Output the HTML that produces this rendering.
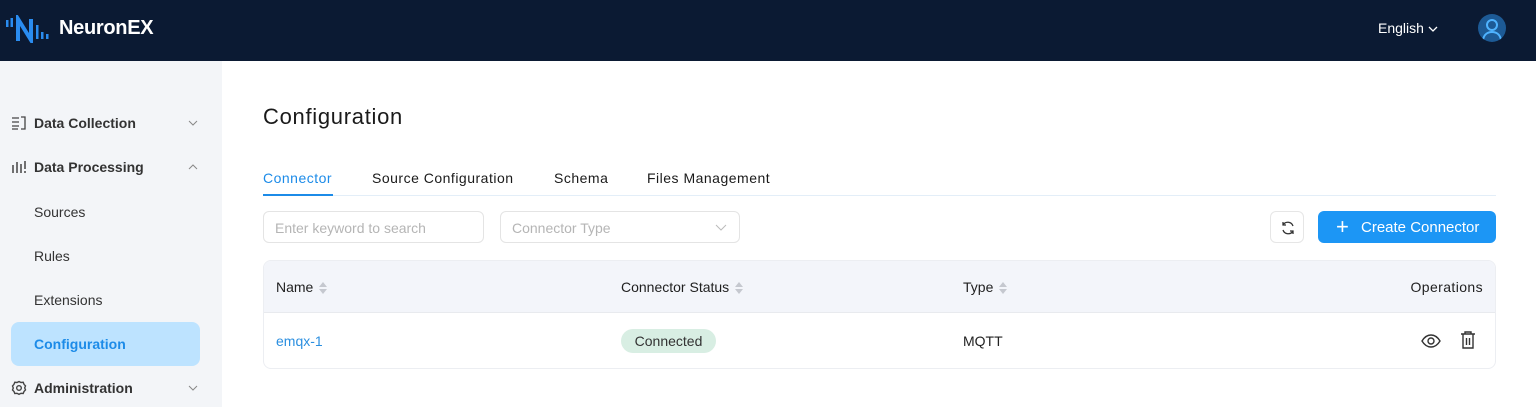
<!DOCTYPE html>
<html><head><meta charset="utf-8"><style>
*{box-sizing:border-box;margin:0;padding:0}
body{width:1536px;height:407px;overflow:hidden;font-family:"Liberation Sans",sans-serif;background:#fff;position:relative;color:#1f1f1f}
.hdr{position:absolute;left:0;top:0;width:1536px;height:61px;background:#0b1a33}
.logo{position:absolute;left:6px;top:15px}
.brand{position:absolute;left:59px;top:17px;color:#fff;font-size:20px;font-weight:bold;letter-spacing:-0.3px}
.lang{position:absolute;left:1378px;top:20px;color:#fff;font-size:14px}
.av{position:absolute;left:1478px;top:14px;width:28px;height:28px;border-radius:50%;background:#1d5a95;overflow:hidden}
.side{position:absolute;left:0;top:61px;width:222px;height:346px;background:#f3f5f8}
.mi{position:absolute;left:34px;font-size:14px;color:#333}
.mi.b{font-weight:bold;color:#333}
.ic{position:absolute;left:11px}
.chev{position:absolute;left:188px}
.act{position:absolute;left:11px;top:322px;width:189px;height:44px;background:#bde3ff;border-radius:8px}
h1{position:absolute;left:263px;top:104px;font-size:22px;font-weight:normal;color:#1a1a1a;letter-spacing:0.7px}
.tab{position:absolute;top:170px;font-size:14px;color:#1a1a1a;letter-spacing:0.5px}
.tabline{position:absolute;left:263px;top:195px;width:1233px;height:1px;background:#e3eef8}
.inp{position:absolute;top:211px;height:32px;border:1px solid #e4e4e4;border-radius:6px;font-size:14px;color:#b5b5b5;padding:8px 11px}
.btn{position:absolute;left:1318px;top:211px;width:178px;height:32px;background:#1c96f5;border-radius:6px;color:#fff;font-size:15px}
.rf{position:absolute;left:1270px;top:211px;width:34px;height:32px;border:1px solid #e6e6e6;border-radius:6px}
.tbl{position:absolute;left:263px;top:260px;width:1233px;height:109px;border:1px solid #eceef2;border-radius:8px;overflow:hidden}
.th{position:absolute;left:0;top:0;width:100%;height:52px;background:#f3f5fa;border-bottom:1px solid #e8eaee}
.t{position:absolute;font-size:14px}
.sort{display:inline-block;vertical-align:middle;margin-left:6px}
.tag{position:absolute;left:357px;top:68px;width:95px;height:24px;border-radius:12px;background:#d8eee3;font-size:14px;text-align:center;line-height:24px;color:#333}
</style></head><body>
<div class="hdr">
<svg class="logo" width="46" height="28" viewBox="0 0 46 28"><g fill="#2a8cf0"><rect x="0" y="5" width="2.5" height="7"/><rect x="4.5" y="3" width="2.5" height="9"/></g><path d="M12 26V4l13 21V4" stroke="#2a8cf0" stroke-width="4" fill="none"/><g fill="#2a8cf0"><rect x="30" y="10" width="2.5" height="14"/><rect x="35" y="17" width="2.5" height="7"/><rect x="40" y="19" width="2.5" height="5"/></g></svg>
<div class="brand">NeuronEX</div>
<div class="lang">English <svg width="10" height="8" viewBox="0 0 10 8"><path d="M1 2l4 4 4-4" stroke="#fff" fill="none" stroke-width="1.3"/></svg></div>
<div class="av"><svg width="28" height="28" viewBox="0 0 28 28"><circle cx="14" cy="11" r="5" stroke="#4fb3ff" stroke-width="2" fill="none"/><path d="M5 26c1-6 5-8 9-8s8 2 9 8" stroke="#4fb3ff" stroke-width="2" fill="none"/></svg></div>
</div>
<div class="side"></div>
<div class="act"></div>
<svg class="ic" style="top:115px" width="16" height="16" viewBox="0 0 16 16" stroke="#444" fill="none" stroke-width="1.3"><path d="M1 3h7M1 7h7M1 11h7M1 14h6M10 2h4v12h-4"/></svg>
<div class="mi b" style="top:115px">Data Collection</div>
<svg class="chev" style="top:120px" width="10" height="7"><path d="M1 1l4 4 4-4" stroke="#888" fill="none"/></svg>
<svg class="ic" style="top:159px" width="16" height="16" viewBox="0 0 16 16" stroke="#444" stroke-width="1.5"><path d="M2 6v8M6 3v11M10 5v9M14 2v8M14 12v2"/></svg>
<div class="mi b" style="top:159px">Data Processing</div>
<svg class="chev" style="top:163px" width="10" height="7"><path d="M1 6l4-4 4 4" stroke="#888" fill="none"/></svg>
<div class="mi" style="top:204px">Sources</div>
<div class="mi" style="top:248px">Rules</div>
<div class="mi" style="top:292px">Extensions</div>
<div class="mi b" style="top:336px;color:#1c8be8">Configuration</div>
<svg class="ic" style="top:380px" width="16" height="16" viewBox="0 0 16 16" stroke="#444" fill="none" stroke-width="1.4"><circle cx="8" cy="8" r="2.3"/><path d="M8 1.5l2 1 2.2-.2.8 2 1.5 1.6-.8 2 .8 2-1.5 1.6-.8 2-2.2-.2-2 1-2-1-2.2.2-.8-2L1.5 10l.8-2-.8-2L3 4.3l.8-2 2.2.2z"/></svg>
<div class="mi b" style="top:380px">Administration</div>
<svg class="chev" style="top:385px" width="10" height="7"><path d="M1 1l4 4 4-4" stroke="#888" fill="none"/></svg>

<h1>Configuration</h1>
<div class="tab" style="left:263px;color:#1c8be8">Connector</div>
<div class="tab" style="left:372px">Source Configuration</div>
<div class="tab" style="left:554px">Schema</div>
<div class="tab" style="left:647px">Files Management</div>
<div class="tabline"></div>
<div style="position:absolute;left:263px;top:194px;width:70px;height:2px;background:#1c8be8"></div>
<div class="inp" style="left:263px;width:221px">Enter keyword to search</div>
<div class="inp" style="left:500px;width:240px">Connector Type<svg style="position:absolute;right:12px;top:12px" width="12" height="7"><path d="M1 1l5 5 5-5" stroke="#bbb" fill="none"/></svg></div>
<div class="rf"><svg style="position:absolute;left:9px;top:8px" width="16" height="16" viewBox="0 0 16 16" stroke="#333" fill="none" stroke-width="1.3"><path d="M13 6A5.5 5.5 0 0 0 3 5M3 2v3h3M3 10a5.5 5.5 0 0 0 10 1M13 14v-3h-3"/></svg></div>
<div class="btn"><span style="position:absolute;left:18px;top:3px;font-size:22px;font-weight:300">+</span><span style="position:absolute;left:43px;top:8px">Create Connector</span></div>
<div class="tbl">
<div class="th"></div>
<div class="t" style="left:12px;top:18px;font-weight:500">Name<svg class="sort" width="8" height="12"><path d="M4 0l4 5H0zM4 12l4-5H0z" fill="#c5c8cf"/></svg></div>
<div class="t" style="left:357px;top:18px;font-weight:500">Connector Status<svg class="sort" width="8" height="12"><path d="M4 0l4 5H0zM4 12l4-5H0z" fill="#c5c8cf"/></svg></div>
<div class="t" style="left:699px;top:18px;font-weight:500">Type<svg class="sort" width="8" height="12"><path d="M4 0l4 5H0zM4 12l4-5H0z" fill="#c5c8cf"/></svg></div>
<div class="t" style="right:12px;top:18px;font-weight:500;letter-spacing:0.4px">Operations</div>
<div class="t" style="left:12px;top:72px;color:#2b8fe0">emqx-1</div>
<div class="tag">Connected</div>
<div class="t" style="left:699px;top:72px;color:#222">MQTT</div>
<svg style="position:absolute;left:1157px;top:73px" width="20" height="14" viewBox="0 0 20 14" stroke="#333" fill="none" stroke-width="1.4"><path d="M1 7c3-5 6-6 9-6s6 1 9 6c-3 5-6 6-9 6s-6-1-9-6z"/><circle cx="10" cy="7" r="3"/></svg>
<svg style="position:absolute;left:1196px;top:70px" width="16" height="18" viewBox="0 0 16 18" stroke="#333" fill="none" stroke-width="1.4"><path d="M1 3h14M5 3V1h6v2M3 3v14h10V3M6.5 7v7M9.5 7v7"/></svg>
</div>
</body></html>
